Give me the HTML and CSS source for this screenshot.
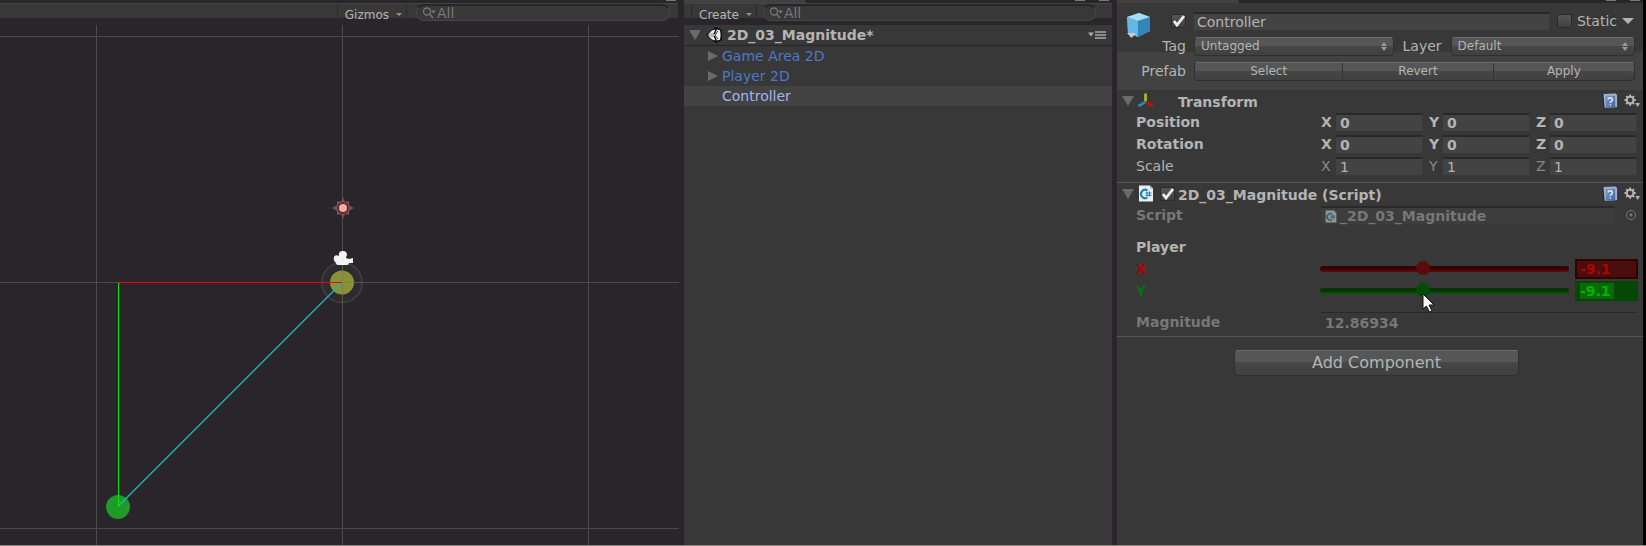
FILE: index.html
```html
<!DOCTYPE html>
<html lang="en">
<head>
<meta charset="utf-8">
<title>2D_03_Magnitude</title>
<link rel="stylesheet" href="styles.css">
</head>
<body>
<svg class="defs" aria-hidden="true">
  <defs>
    <linearGradient id="bookfill" x1="0" y1="0" x2="1" y2="1"><stop offset="0" stop-color="#7f9cc8"/><stop offset="1" stop-color="#41659f"/></linearGradient>
    <symbol id="search" viewBox="0 0 14 12"><circle cx="5" cy="4.500" r="3.500" fill="none" stroke="#777" stroke-width="1.300"/><path d="M7.500 7 11 11" stroke="#777" stroke-width="1.500"/><path d="M9 3.500h5l-2.500 3z" fill="#777"/></symbol>
    <symbol id="book" viewBox="0 0 16 17"><path d="M0 1l3 1v14l-2-3z" fill="#101c30"/><path d="M1 1l13-.5 1.500 1.500v13L3 16 2 14z" fill="#9db2d0"/><path d="M3 3h10.500v12.500L3.500 16z" fill="url(#bookfill)"/><path d="M6 7q0-2 2.300-2t2.300 2q0 1.200-1.300 1.800-.9.500-.9 1.700M8.400 12v1.400" stroke="#e6edf6" stroke-width="1.500" fill="none"/></symbol>
    <symbol id="gear" viewBox="0 0 17 15"><circle cx="6.500" cy="6.500" r="3.600" fill="none" stroke="#b4b4b4" stroke-width="2.200"/><path d="M6.500 .5v2.500M6.500 10v2.500M.5 6.500H3M10 6.500h2.500M2.300 2.300l1.700 1.700M9 9l1.700 1.700M10.700 2.300 9 4M4 9l-1.700 1.700" stroke="#b4b4b4" stroke-width="2"/><path d="M12 9.500h5L14.500 14z" fill="#b4b4b4"/></symbol>
    <symbol id="script" viewBox="0 0 15 17"><path d="M.5.500h11l3 3v13H.5z" fill="#e9eef2"/><path d="M11.500.500v3h3z" fill="#a9b3bb"/><path d="M9 5.500A4.200 4.200 0 1 0 9 12.500" fill="none" stroke="#1c7fb5" stroke-width="2"/><path d="M8.500 6.500v5M11 6.500v5M7 8h6M7 10.300h6" stroke="#1c7fb5"/></symbol>
  </defs>
</svg>
<main class="editor">
  <section class="panel scene">
    <div class="tabs"><i class="stub"></i></div>
    <div class="toolbar">
      <span class="spacer"></span>
      <button class="tool">Gizmos <i class="caret"></i></button>
      <label class="search"><svg class="lens"><use href="#search"/></svg><input type="text" value="All" aria-label="Search scene"></label>
    </div>
    <svg class="canvas" viewBox="0 21 679 524" preserveAspectRatio="xMinYMin slice" role="img" aria-label="Scene view">
      <path d="M96.500 25v521M342.500 25v521M588.500 25v521M0 36.500h679M0 282.500h679M0 528.500h679" stroke="#4c4a4e" fill="none"/>
      <circle cx="342" cy="282.500" r="20" fill="#2c2b30" stroke="#3c3b40" stroke-width="2"/>
      <circle cx="342" cy="282.500" r="12" fill="#8b9236"/>
      <path d="M342.500 262v41M330 282.500h33" stroke="#77774a" opacity=".6"/>
      <circle cx="118" cy="507" r="12" fill="#209a28"/>
      <path d="M342 282.500 118.500 506" stroke="#1cb5b8" stroke-width="1.300"/>
      <path d="M118.500 282v225" stroke="#00e800"/>
      <path d="M118 282.500h224" stroke="#f40000"/>
      <g transform="translate(343 208)"><path d="M0-11 2-6 6-7 6-3 11 0 6 3 6 7 2 6 0 11-2 6-6 7-6 3-11 0-6-3-6-7-2-6z" fill="#7d4d50"/><circle r="5.500" fill="#41292d"/><circle r="4" fill="#ffa8a6"/></g>
      <path d="M334 257q1-3 5-1-1-5 4-5 4 0 4 4-1 2-1 3l3 1 4-1v5h-4q0 2-2 2h-9q-2 0-2-2-3-2-2-6z" fill="#f2f2f2"/>
    </svg>
  </section>

  <section class="panel hierarchy">
    <div class="tabs"><i class="tab"></i><i class="stub"></i><i class="stub"></i></div>
    <div class="toolbar">
      <button class="tool">Create <i class="caret"></i></button>
      <label class="search"><svg class="lens"><use href="#search"/></svg><input type="text" value="All" aria-label="Search hierarchy"></label>
    </div>
    <div class="tree">
      <div class="root">
        <i class="open"></i>
        <svg class="unity" viewBox="0 0 16 16"><path d="M0 8 10 0l6 3v10l-6 3z" fill="#0c0c0c"/><path d="M1.500 8 6 3.500 9.500 2.500 7.500 6.800H4.500zM1.500 8 6 12.500l3.500 1L7.500 9.200H4.500zM11 2.500l3 .8.500 3.200v3l-.5 3.200-3 .8L9 8.800v-1.600z" fill="#eee"/><path d="M3 8h7" stroke="#eee" stroke-width="1.500"/><path d="M9 8l3-4M9 8l3 4" stroke="#111" stroke-width=".8"/></svg>
        <h2>2D_03_Magnitude*</h2>
        <button class="menu" aria-label="Scene menu"><svg viewBox="0 0 18 8"><path d="M0 1.500h6l-3 4z" fill="#a8a8a8"/><path d="M7 1h11M7 4h11M7 7h11" stroke="#a8a8a8" stroke-width="1.500"/></svg></button>
      </div>
      <ul>
        <li><i class="shut"></i>Game Area 2D</li>
        <li><i class="shut"></i>Player 2D</li>
        <li class="selected">Controller</li>
      </ul>
    </div>
  </section>

  <section class="panel inspector">
    <div class="tabs"><i class="tab"></i><i class="stub"></i><i class="stub"></i></div>
    <div class="object">
      <svg class="cube" viewBox="0 0 27 27"><path d="M2 5 14 1l11 4v14L13 25 3 21z" fill="#4da3d3"/><path d="M2 5 14 1l11 4-12 4z" fill="#a4def5"/><path d="M13 9l12-4v14l-12 6z" fill="#3585b8"/><path d="M2 5l11 4v16L3 21z" fill="#61b8e3"/><path d="M2 21h9l-4.500 5z" fill="#ccc"/></svg>
      <input class="check" type="checkbox" checked aria-label="Active">
      <div class="line name">
        <input class="field" type="text" value="Controller" aria-label="Name">
        <input class="check" type="checkbox" id="static"><label for="static">Static</label><i class="down"></i>
      </div>
      <label class="side" for="tag">Tag</label>
      <div class="line">
        <span class="pick wide"><select id="tag"><option>Untagged</option></select></span>
        <label for="layer">Layer</label>
        <span class="pick"><select id="layer"><option>Default</option></select></span>
      </div>
      <span class="side full">Prefab</span>
      <div class="segments"><button>Select</button><button>Revert</button><button>Apply</button></div>
    </div>

    <section class="component">
      <header>
        <i class="open"></i>
        <svg class="kind" viewBox="0 0 17 17"><path d="M8 1v9" stroke="#8fc31c" stroke-width="3"/><path d="M8 10 .5 14.500" stroke="#2c83c6" stroke-width="3"/><path d="M8 10l8 4.500" stroke="#c4100c" stroke-width="3"/></svg>
        <span class="nocheck"></span>
        <h3>Transform</h3>
        <button class="icon" aria-label="Help"><svg><use href="#book"/></svg></button>
        <button class="icon" aria-label="Settings"><svg><use href="#gear"/></svg></button>
      </header>
      <div class="row strong"><span>Position</span><div class="vector">
        <label for="px">X</label><input class="field" id="px" value="0"><label for="py">Y</label><input class="field" id="py" value="0"><label for="pz">Z</label><input class="field" id="pz" value="0"></div></div>
      <div class="row strong"><span>Rotation</span><div class="vector">
        <label for="rx">X</label><input class="field" id="rx" value="0"><label for="ry">Y</label><input class="field" id="ry" value="0"><label for="rz">Z</label><input class="field" id="rz" value="0"></div></div>
      <div class="row"><span>Scale</span><div class="vector dimaxis">
        <label for="sx">X</label><input class="field" id="sx" value="1"><label for="sy">Y</label><input class="field" id="sy" value="1"><label for="sz">Z</label><input class="field" id="sz" value="1"></div></div>
    </section>

    <section class="component ruled">
      <header>
        <i class="open"></i>
        <svg class="kind"><use href="#script"/></svg>
        <input class="check" type="checkbox" checked aria-label="Enabled">
        <h3>2D_03_Magnitude (Script)</h3>
        <button class="icon" aria-label="Help"><svg><use href="#book"/></svg></button>
        <button class="icon" aria-label="Settings"><svg><use href="#gear"/></svg></button>
      </header>
      <div class="row strong muted"><span>Script</span><div class="object-ref">
        <div class="field ref"><svg><use href="#script"/></svg>_2D_03_Magnitude</div>
        <button class="target" aria-label="Pick script"></button></div></div>
      <div class="row strong group"><span>Player</span></div>
      <div class="row strong red"><label for="x">X</label><div class="slide">
        <input id="x" type="range" min="-50" max="50" step="0.1" value="-9.1"><input class="number" type="text" value="-9.1" aria-label="X value"></div></div>
      <div class="row strong green"><label for="y">Y</label><div class="slide">
        <span class="track"><input id="y" type="range" min="-50" max="50" step="0.1" value="-9.1"><svg class="cursor" viewBox="0 0 13 20"><path d="M1 1v15l3.500-3 3 6 2.500-1-3-6h5z" fill="#fff" stroke="#111"/></svg></span>
        <span class="number"><mark>-9.1</mark></span></div></div>
      <div class="row strong muted total"><label for="mag">Magnitude</label><input class="readout" id="mag" readonly value="12.86934"></div>
    </section>
    <div class="footer ruled"><button class="add">Add Component</button></div>
  </section>
</main>
</body>
</html>
```
FILE: styles.css
```css
* { box-sizing: border-box; }
body { margin: 0; background: #29252a; color: #b4b4b4; font: 14px/20px "DejaVu Sans", Verdana, sans-serif; }
input, button, select { font: inherit; color: inherit; margin: 0; padding: 0; border: 0; background: none; min-width: 0; border-radius: 0; outline: 0; }
svg { display: block; }
h2, h3 { margin: 0; font-size: 14px; font-weight: bold; }
ul { margin: 0; padding: 0; list-style: none; }
.defs { position: absolute; width: 0; height: 0; }

.editor { display: grid; grid-template-columns: 679fr 428fr 526fr; gap: 5px; min-height: 100vh; padding-right: 3px; border-bottom: 1px solid #8c8989; background: linear-gradient(to left, #000 3px, #29252a 3px); }
.panel { display: flex; flex-direction: column; min-width: 0; }
.tabs { display: flex; justify-content: flex-end; gap: 14px; height: 3px; padding-right: 3px; }
.tab { width: 122px; margin-right: auto; border-radius: 0 2px 0 0; background: #414141; }
.stub { width: 10px; height: 1px; background: #777; }

.toolbar { display: flex; height: 18px; border-top: 1px solid #454545; background: linear-gradient(#383838 14px, #29252a 14px); }
.spacer { flex: 1; }
.tool { display: flex; align-items: center; gap: 7px; padding: 4px 4px 0 7px; border: solid #2a282a; border-width: 0 1px; font-size: 12px; line-height: 14px; }
.hierarchy .tool { margin-left: 7px; }
.caret { border: solid transparent; border-width: 3px 3px 0; border-top-color: #909090; }
.search { display: flex; align-items: center; gap: 1px; margin: 0 8px 0 9px; padding-left: 5px; flex: 0 1 254px; height: 17px; border: 1px solid #464646; border-top: 2px solid #272527; border-radius: 8px; background: #383838; color: #777; }
.hierarchy .search { flex: 1; margin: 0 16px 0 6px; }
.search input { flex: 1; height: 14px; line-height: 14px; }
.lens { width: 14px; height: 12px; }
.canvas { flex: 1; width: 100%; height: 0; min-height: 0; }
.scene .toolbar { margin-right: 1px; }

.tree { flex: 1; margin-top: 4px; background: #383838; }
.root { display: flex; align-items: center; height: 21px; padding-left: 5px; border-bottom: 1px solid #262626; }
.open { width: 11px; border: solid transparent; border-width: 10px 6px 0; border-top-color: #6a6a6a; }
.shut { position: absolute; left: 24px; top: 5px; border: solid transparent; border-width: 5px 0 5px 10px; border-left-color: #6a6a6a; }
.unity { width: 16px; height: 16px; margin: 0 5px 0 5px; }
.menu { width: 18px; margin-left: auto; margin-right: 6px; }
.tree li { position: relative; height: 20px; padding-left: 38px; color: #4b78c8; }
.tree .selected { background: #434343; color: #a3b5ec; }

.inspector { background: #383838; }
.inspector .tabs { background: #29252a; }
.object { display: grid; grid-template-columns: 29px 40px 1fr; grid-template-rows: 24px 24px 24px; row-gap: 1px; align-items: center; padding: 6px 8px 7px; height: 87px; background: linear-gradient(#383838 49px, #424242 49px); }
.cube { grid-row: 1 / 3; width: 27px; height: 27px; align-self: start; margin-top: 3px; }
.check { appearance: none; flex: none; width: 15px; height: 14px; border: 1px solid #2b2b2b; border-radius: 2px; background: linear-gradient(#565656, #404040); }
.check:checked { background: url("data:image/svg+xml,%3Csvg xmlns='http://www.w3.org/2000/svg' viewBox='0 0 13 12'%3E%3Cpath d='M2 6l3 4 7-9' fill='none' stroke='%23eee' stroke-width='2.800'/%3E%3C/svg%3E") center / 100% 100%, linear-gradient(#565656, #404040); }
.object > .check { justify-self: end; margin-right: 8px; }
.line { display: flex; align-items: center; gap: 9px; }
.name { gap: 5px; margin-right: 1px; }
.name .field { flex: 1; margin-right: 2px; padding-left: 3px; }
.down { border: solid transparent; border-width: 6px 6px 0; border-top-color: #b4b4b4; }
.side { text-align: right; padding-right: 8px; }
.full { grid-column: 1 / 3; }
.pick { position: relative; flex: 184 1 0; min-width: 0; }
.pick.wide { flex-grow: 199; }
.pick select, .segments, .add { border: 1px solid #303030; border-top-color: #6c6c6c; border-radius: 4px; background: linear-gradient(#565656 45%, #474747 45%, #404040); }
.pick select { appearance: none; width: 100%; height: 19px; padding-left: 6px; font-size: 12px; line-height: 16px; display: block; }
.pick::before, .pick::after { content: ""; position: absolute; right: 7px; border: solid transparent; }
.pick::before { top: 5px; border-width: 0 3px 4px; border-bottom-color: #999; }
.pick::after { bottom: 5px; border-width: 4px 3px 0; border-top-color: #999; }
.segments { display: grid; grid-template-columns: 148fr 151fr 142fr; height: 19px; }
.segments button { font-size: 12px; line-height: 16px; }
.segments button + button { border-left: 1px solid #353535; }
.field { height: 18px; border-top: 2px solid #2b2829; border-right: 1px solid #3c3c3c; background: #434343; line-height: 16px; }

.component { padding: 0 6px 4px 5px; }
.component header { display: flex; align-items: center; height: 21px; margin-right: -3px; }
.kind { width: 16px; height: 17px; margin: 0 6px 0 4px; }
.nocheck { width: 15px; }
.component h3 { flex: 1; margin-left: 3px; padding-top: 2px; }
.icon { width: 16px; height: 16px; margin-left: 6px; }
.icon svg { width: 16px; height: 16px; }
.row { display: grid; grid-template-columns: 185px 1fr; align-items: center; height: 22px; padding-left: 14px; }
.strong { font-weight: bold; }
.vector { display: grid; grid-template-columns: 15px 1fr 20px 1fr 20px 1fr; align-items: center; }
.vector label:not(:first-child) { margin-left: 6px; }
.vector .field { width: 100%; padding-left: 4px; }
.dimaxis label { color: #888; }
.ruled { border-top: 1px solid #565656; }
.component.ruled { padding-top: 0; padding-bottom: 3px; margin-top: 1px; }
.muted { color: #777; }
.object-ref { display: flex; align-items: center; gap: 11px; }
.ref { flex: 1; display: flex; align-items: center; gap: 3px; padding-left: 4px; background: #3d3d3d; }
.ref svg { width: 12px; height: 13px; opacity: .5; }
.target { width: 10px; height: 10px; margin-right: 1px; border: 1px solid #777; border-radius: 50%; background: radial-gradient(#777 1px, transparent 2px); }
.group { margin-top: 10px; }
.red { color: #b40000; --track: #350303; --edge: #5a0808; --knob: #5a0c0c; --box: #4b0d0d; --frame: #320000; }
.green { color: #0b6e0b; --track: #043504; --edge: #074f07; --knob: #064806; --box: #064606; --frame: #064606; }
.slide { display: grid; grid-template-columns: 1fr 63px; gap: 6px; align-items: center; margin: 0 -1px; }
.slide input[type=range] { appearance: none; display: block; width: 100%; height: 14px; }
input[type=range]::-webkit-slider-runnable-track { height: 6px; border-radius: 3px; background: var(--track); border-bottom: 2px solid var(--edge); }
input[type=range]::-webkit-slider-thumb { appearance: none; width: 14px; height: 14px; margin-top: -5px; border-radius: 50%; background: var(--knob); }
.number { width: 100%; height: 20px; padding-left: 3px; border: 2px solid var(--frame); background: var(--box); line-height: 16px; }
.green .number { display: block; }
mark { display: inline-block; padding-right: 3px; background: #0a6a0a; color: #00b400; }
.track { position: relative; }
.cursor { position: absolute; left: 41%; top: 9px; width: 13px; height: 20px; }
.total { margin-top: 9px; }
.readout { height: 20px; width: 100%; padding-left: 4px; border-top: 1px solid #282828; }
.footer { padding: 13px 124px 0 117px; }
.add { display: block; width: 100%; height: 26px; font-size: 16px; line-height: 22px; }
```
